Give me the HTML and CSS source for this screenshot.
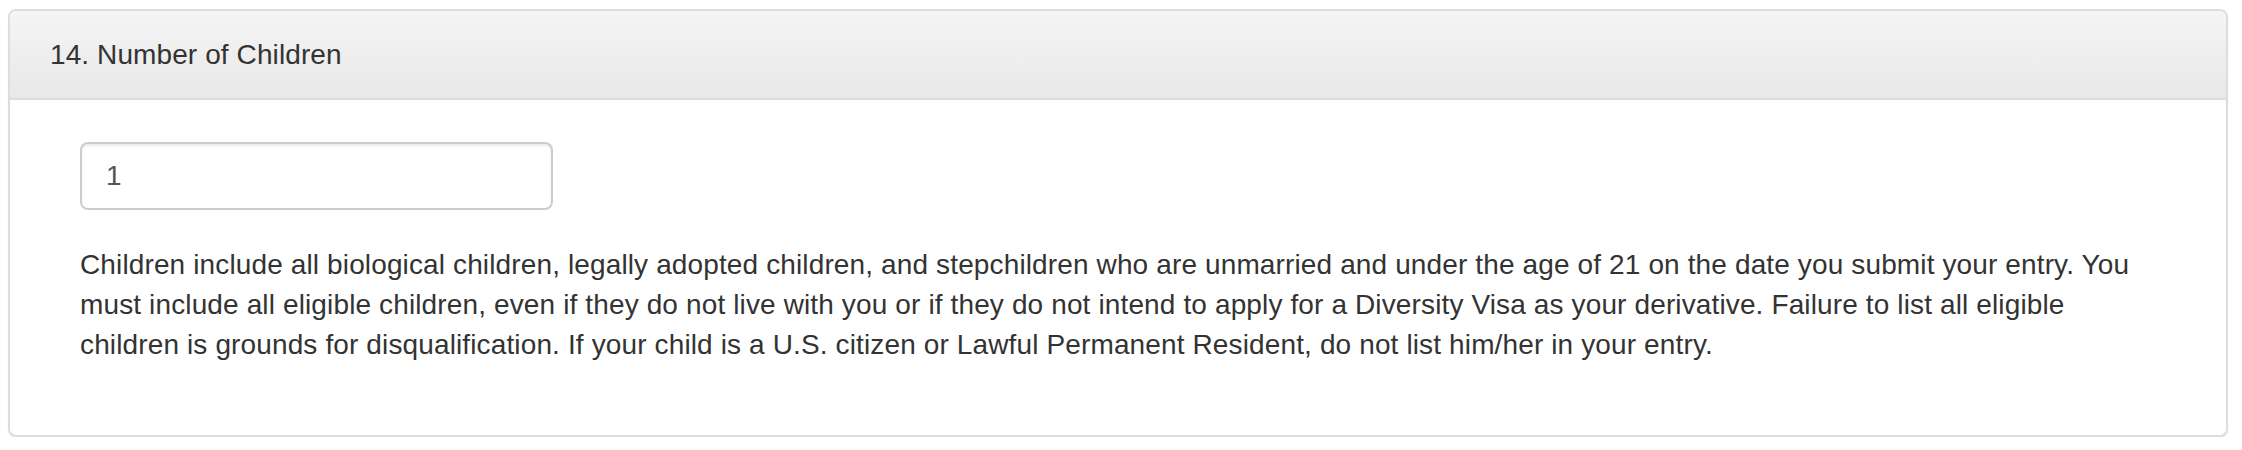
FILE: index.html
```html
<!DOCTYPE html>
<html lang="en">
<head>
<meta charset="utf-8">
<title>Number of Children</title>
<link rel="stylesheet" href="styles.css">
</head>
<body>
<div class="page">
  <section class="panel">
    <div class="panel-heading">14. Number of Children</div>
    <div class="panel-body">
      <input class="form-control" type="text" value="1">
      <p class="help">Children include all biological children, legally adopted children, and stepchildren who are unmarried and under the age of 21 on the date you submit your entry. You must include all eligible children, even if they do not live with you or if they do not intend to apply for a Diversity Visa as your derivative. Failure to list all eligible children is grounds for disqualification. If your child is a U.S. citizen or Lawful Permanent Resident, do not list him/her in your entry.</p>
    </div>
  </section>
</div>
</body>
</html>
```
FILE: styles.css
```css
html, body {
  margin: 0;
  padding: 0;
  background: #fff;
}
.page {
  padding: 9px 14px 0 8px;
  font-family: "Liberation Sans", Arial, Helvetica, sans-serif;
  font-size: 28px;
  line-height: 40px;
  letter-spacing: 0.1px;
  color: #333;
}
.panel {
  border: 2px solid #ddd;
  border-radius: 8px;
  background: #fff;
  box-shadow: 0 2px 2px rgba(0,0,0,0.05);
}
.panel-heading {
  padding: 24px 40px 23px;
  border-bottom: 2px solid #ddd;
  border-radius: 6px 6px 0 0;
  background: linear-gradient(to bottom, #f5f5f5 0%, #e8e8e8 100%);
  color: #333;
}
.panel-body {
  padding: 42px 80px 70px 70px;
}
.form-control {
  display: block;
  box-sizing: border-box;
  width: 473px;
  height: 68px;
  margin: 0;
  padding: 0 24px;
  border: 2px solid #ccc;
  border-radius: 8px;
  background: #fff;
  box-shadow: inset 0 2px 2px rgba(0,0,0,0.075);
  font-family: "Liberation Sans", Arial, Helvetica, sans-serif;
  font-size: 28px;
  color: #555;
  outline: none;
}
.help {
  margin: 35px 0 0;
  letter-spacing: 0.13px;
}
```
